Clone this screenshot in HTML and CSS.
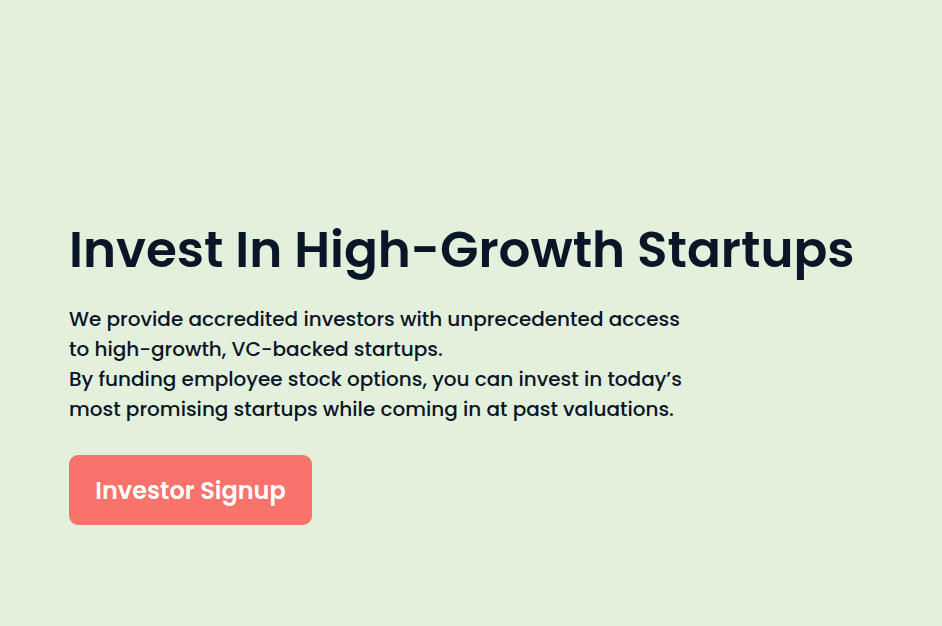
FILE: index.html
```html
<!DOCTYPE html>
<html lang="en">
<head>
    <meta charset="UTF-8">
    <meta name="viewport" content="width=device-width, initial-scale=1.0">
    <link rel="stylesheet" href="styles.css">
</head>
<body>
    <section class="hero">
        <h1 class="hero-title">Invest In High-Growth Startups</h1>
        <p class="hero-text">
            We provide accredited investors with unprecedented access<br>
            to high-growth, VC-backed startups.<br>
            By funding employee stock options, you can invest in today’s<br>
            most promising startups while coming in at past valuations.
        </p>
        <a class="hero-button" href="#">Investor Signup</a>
    </section>
</body>
</html>
```

FILE: styles.css
```css
html, body {
    height: 100%;
}
body {
    margin: 0;
    background-color: #e3f0dc;
    color: #0b1528;
    font-family: Poppins, "Open Sans", "Noto Sans", sans-serif;
}
.hero {
    padding: 218px 69px 0;
}
.hero-title {
    margin: 0;
    font-size: 50px;
    font-weight: 600;
    line-height: 64px;
    white-space: nowrap;
}
.hero-text {
    margin: 22px 0 0;
    font-size: 20px;
    font-weight: 500;
    line-height: 30px;
    white-space: nowrap;
}
.hero-button {
    display: inline-flex;
    align-items: center;
    justify-content: center;
    margin-top: 31px;
    width: 243px;
    height: 70px;
    border-radius: 9px;
    background-color: #f8736b;
    color: #fff;
    font-size: 24px;
    font-weight: 600;
    text-decoration: none;
}
```
